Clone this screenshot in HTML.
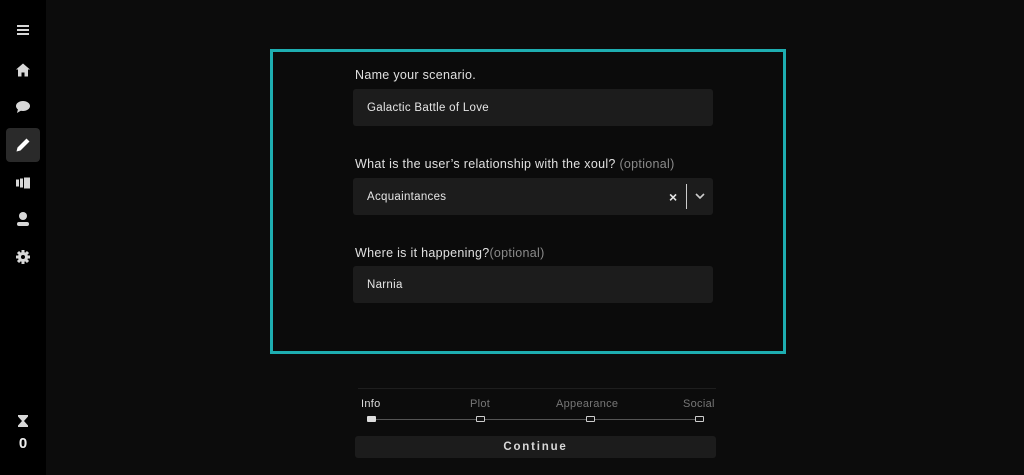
<!DOCTYPE html>
<html><head><style>
*{margin:0;padding:0;box-sizing:border-box}
body{width:1024px;height:475px;background:#0c0c0c;font-family:"Liberation Sans",sans-serif;color:#ddd;position:relative;overflow:hidden}
.side{position:absolute;left:0;top:0;width:46px;height:475px;background:#000}
.ic{position:absolute;left:23px;transform:translate(-50%,-50%);fill:#d8d8d8}
.act{position:absolute;left:6px;top:128px;width:34px;height:34px;background:#2a2a2a;border-radius:4px}
.box{position:absolute;left:270px;top:49px;width:516px;height:305px;border:3px solid #1eaeb1;background:#0b0b0b}
.lab{position:absolute;left:355px;font-size:12.5px;color:#e0e0e0;letter-spacing:0.3px}
.lab span{color:#8a8a8a}
.inp{position:absolute;left:353px;width:360px;height:37px;background:#1c1c1c;border-radius:3px;font-size:11.5px;color:#e6e6e6;padding-left:14px;line-height:39px;letter-spacing:0.3px}
.step{position:absolute;top:398px;font-size:11px;color:#777;letter-spacing:0.3px}
.mk{position:absolute;top:416px;width:9px;height:6px;border:1px solid #ccc;border-radius:1px;background:#111}
</style></head><body>
<div class="side">
<svg class="ic" style="top:30px" width="12" height="10"><rect y="0" width="12" height="2"/><rect y="4" width="12" height="2"/><rect y="8" width="12" height="2"/></svg>
<svg class="ic" style="top:70px" width="14" height="13"><path d="M7 0L0 6h2v7h3.5V9h3v4H12V6h2z"/></svg>
<svg class="ic" style="top:107px" width="14" height="12"><ellipse cx="7" cy="5" rx="7" ry="5"/><path d="M2 8L1 12L6 9z"/></svg>
<div class="act"></div>
<svg class="ic" style="top:145px;fill:#fff" width="13" height="13"><path d="M0 13l1-4 8-8 3 3-8 8z M10 0l3 3-1 1-3-3z"/></svg>
<svg class="ic" style="top:183px" width="14" height="11"><rect x="0" y="2" width="3" height="7"/><rect x="4" y="1" width="3" height="9"/><rect x="8" y="0" width="6" height="11"/></svg>
<svg class="ic" style="top:219px" width="12" height="14"><circle cx="6" cy="4" r="4"/><rect x="0" y="10" width="12" height="4" rx="2"/></svg>
<svg class="ic" style="top:257px" width="14" height="14"><circle cx="7" cy="7" r="5"/><g stroke="#d8d8d8" stroke-width="3"><path d="M7 0v14M0 7h14M2 2l10 10M12 2L2 12"/></g><circle cx="7" cy="7" r="2" fill="#000"/></svg>
<svg class="ic" style="top:421px" width="10" height="12"><path d="M0 0h10v1.5L6 6l4 4.5V12H0v-1.5L4 6 0 1.5z"/></svg>
<div style="position:absolute;left:0;width:46px;top:435px;text-align:center;font-size:15px;font-weight:bold;color:#eee">0</div>
</div>
<div class="box"></div>
<div class="lab" style="top:68px">Name your scenario.</div>
<div class="inp" style="top:89px">Galactic Battle of Love</div>
<div class="lab" style="top:157px">What is the user’s relationship with the xoul? <span>(optional)</span></div>
<div class="inp" style="top:178px">Acquaintances
<span style="position:absolute;left:316px;top:0;font-size:14px;font-weight:bold">×</span>
<span style="position:absolute;left:333px;top:6px;width:1px;height:25px;background:#ccc"></span>
<svg style="position:absolute;left:342px;top:15px" width="10" height="7"><path d="M1 1l4 4 4-4" stroke="#ccc" stroke-width="1.6" fill="none"/></svg></div>
<div class="lab" style="top:246px">Where is it happening?<span>(optional)</span></div>
<div class="inp" style="top:266px">Narnia</div>
<div style="position:absolute;left:358px;top:388px;width:358px;height:1px;background:#1e1e1e"></div>
<div class="step" style="left:361px;color:#ddd">Info</div>
<div class="step" style="left:470px">Plot</div>
<div class="step" style="left:556px">Appearance</div>
<div class="step" style="left:683px">Social</div>
<div style="position:absolute;left:370px;top:419px;width:332px;height:1px;background:#555"></div>
<div class="mk" style="left:367px;background:#ddd;border-color:#ddd"></div>
<div class="mk" style="left:476px"></div>
<div class="mk" style="left:586px"></div>
<div class="mk" style="left:695px"></div>
<div style="position:absolute;left:355px;top:436px;width:361px;height:22px;background:#1c1c1c;border-radius:3px;text-align:center;line-height:23px;font-size:11.5px;letter-spacing:1.8px;font-weight:bold;color:#d8d8d8">Continue</div>
</body></html>
